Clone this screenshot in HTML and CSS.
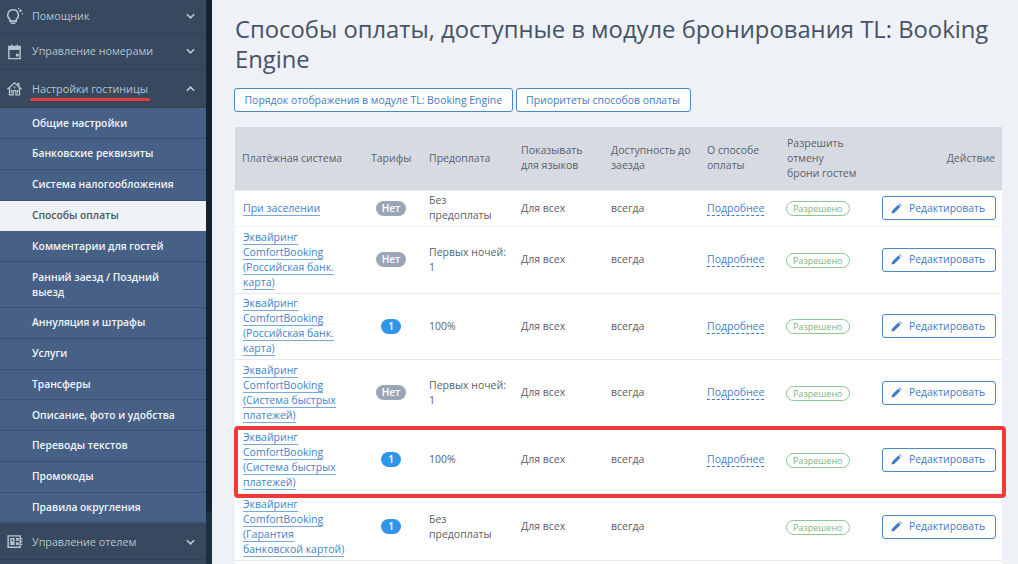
FILE: index.html
```html
<!DOCTYPE html>
<html lang="ru">
<head>
<meta charset="utf-8">
<title>Способы оплаты</title>
<link rel="stylesheet" href="styles.css">
</head>
<body>
<div class="app">
  <nav class="sidebar">
    <a class="top first"><svg class="ic" viewBox="0 0 24 24"><path d="M10 2.500a7.500 7.500 0 0 0-4.500 13.500V18.500h9V16A7.500 7.500 0 0 0 10 2.500z" fill="none" stroke="currentColor" stroke-width="2.200"/><path d="M6.500 20.500h7v2h-7z" fill="currentColor"/><circle cx="20.500" cy="4" r="1.800" fill="currentColor"/><circle cx="23.500" cy="8" r="1" fill="currentColor"/><circle cx="18" cy="0.800" r="1" fill="currentColor"/></svg><span class="lbl">Помощник</span><svg class="chev" viewBox="0 0 10 6"><path d="M1 1l4 4 4-4" fill="none" stroke="currentColor" stroke-width="1.800"/></svg></a>
    <a class="top"><svg class="ic" viewBox="0 0 24 24"><path d="M4 5h16v17H4z" fill="none" stroke="currentColor" stroke-width="2"/><path d="M4 5h16v5H4zM7 2h2v4H7zM15 2h2v4h-2zM14 15h4v4h-4z" fill="currentColor"/></svg><span class="lbl">Управление номерами</span><svg class="chev" viewBox="0 0 10 6"><path d="M1 1l4 4 4-4" fill="none" stroke="currentColor" stroke-width="1.800"/></svg></a>
    <a class="top open"><svg class="ic" viewBox="0 0 24 24"><path d="M2 13L12 4l10 9M5 11v10h5v-6h4v6h5V11" fill="none" stroke="currentColor" stroke-width="2"/><path d="M16 4h3v5l-3-2.500zM11 9h2v2.500h-2zM7 14h1.500v4H7zM15.500 14H17v4h-1.500z" fill="currentColor"/></svg><span class="lbl">Настройки гостиницы</span><svg class="chev" viewBox="0 0 10 6"><path d="M1 5l4-4 4 4" fill="none" stroke="currentColor" stroke-width="1.800"/></svg></a>
    <a class="sub">Общие настройки</a>
    <a class="sub">Банковские реквизиты</a>
    <a class="sub">Система налогообложения</a>
    <a class="sub active">Способы оплаты</a>
    <a class="sub">Комментарии для гостей</a>
    <a class="sub tall">Ранний заезд / Поздний выезд</a>
    <a class="sub">Аннуляция и штрафы</a>
    <a class="sub">Услуги</a>
    <a class="sub">Трансферы</a>
    <a class="sub">Описание, фото и удобства</a>
    <a class="sub">Переводы текстов</a>
    <a class="sub">Промокоды</a>
    <a class="sub">Правила округления</a>
    <a class="top last"><svg class="ic" viewBox="0 0 24 24"><path d="M3 4h17v16H3z" fill="none" stroke="currentColor" stroke-width="2"/><path d="M6 7h6v10H6zM14 7h4v4h-4zM14 13h4v4h-4zM21 7h2v2h-2zM21 11h2v2h-2zM21 15h2v2h-2z" fill="currentColor"/><path d="M8 9h2v3H8z" fill="#36495f"/></svg><span class="lbl">Управление отелем</span><svg class="chev" viewBox="0 0 10 6"><path d="M1 1l4 4 4-4" fill="none" stroke="currentColor" stroke-width="1.800"/></svg></a>
  </nav>
  <div class="scroll"><div class="thumb"></div></div>
  <main class="content">
    <h1>Способы оплаты, доступные в модуле бронирования TL: Booking Engine</h1>
    <div class="actions">
      <a class="btn">Порядок отображения в модуле TL: Booking Engine</a>
      <a class="btn">Приоритеты способов оплаты</a>
    </div>
    <table>
      <colgroup><col class="c1"><col class="c2"><col class="c3"><col class="c4"><col class="c5"><col class="c6"><col class="c7"><col class="c8"></colgroup>
      <thead>
        <tr><th>Платёжная система</th><th class="tar">Тарифы</th><th>Предоплата</th><th>Показывать для языков</th><th>Доступность до заезда</th><th>О способе оплаты</th><th>Разрешить<br>отмену<br>брони гостем</th><th class="act">Действие</th></tr>
      </thead>
      <tbody>
        <tr class="short"><td class="name"><a class="lnk">При заселении</a></td><td class="tar"><span class="bdg no">Нет</span></td><td>Без предоплаты</td><td>Для всех</td><td>всегда</td><td><a class="more">Подробнее</a></td><td><span class="ok">Разрешено</span></td><td class="act"><a class="edit"><svg class="pen" viewBox="0 0 12 12"><path d="M0.500 11.500l0.700-3L8 1.700l2.300 2.300-6.800 6.800zM8.800 0.900l0.700-0.500 2.100 2.100-0.500 0.700z" fill="currentColor"/></svg>Редактировать</a></td></tr>
        <tr><td class="name"><a class="lnk">Эквайринг ComfortBooking (Российская банк. карта)</a></td><td class="tar"><span class="bdg no">Нет</span></td><td>Первых ночей: 1</td><td>Для всех</td><td>всегда</td><td><a class="more">Подробнее</a></td><td><span class="ok">Разрешено</span></td><td class="act"><a class="edit"><svg class="pen" viewBox="0 0 12 12"><path d="M0.500 11.500l0.700-3L8 1.700l2.300 2.300-6.800 6.800zM8.800 0.900l0.700-0.500 2.100 2.100-0.500 0.700z" fill="currentColor"/></svg>Редактировать</a></td></tr>
        <tr class="tight"><td class="name"><a class="lnk">Эквайринг ComfortBooking (Российская банк. карта)</a></td><td class="tar"><span class="bdg">1</span></td><td>100%</td><td>Для всех</td><td>всегда</td><td><a class="more">Подробнее</a></td><td><span class="ok">Разрешено</span></td><td class="act"><a class="edit"><svg class="pen" viewBox="0 0 12 12"><path d="M0.500 11.500l0.700-3L8 1.700l2.300 2.300-6.800 6.800zM8.800 0.900l0.700-0.500 2.100 2.100-0.500 0.700z" fill="currentColor"/></svg>Редактировать</a></td></tr>
        <tr><td class="name"><a class="lnk">Эквайринг ComfortBooking (Система быстрых платежей)</a></td><td class="tar"><span class="bdg no">Нет</span></td><td>Первых ночей: 1</td><td>Для всех</td><td>всегда</td><td><a class="more">Подробнее</a></td><td><span class="ok">Разрешено</span></td><td class="act"><a class="edit"><svg class="pen" viewBox="0 0 12 12"><path d="M0.500 11.500l0.700-3L8 1.700l2.300 2.300-6.800 6.800zM8.800 0.900l0.700-0.500 2.100 2.100-0.500 0.700z" fill="currentColor"/></svg>Редактировать</a></td></tr>
        <tr><td class="name"><a class="lnk">Эквайринг ComfortBooking (Система быстрых платежей)</a></td><td class="tar"><span class="bdg">1</span></td><td>100%</td><td>Для всех</td><td>всегда</td><td><a class="more">Подробнее</a></td><td><span class="ok">Разрешено</span></td><td class="act"><a class="edit"><svg class="pen" viewBox="0 0 12 12"><path d="M0.500 11.500l0.700-3L8 1.700l2.300 2.300-6.800 6.800zM8.800 0.900l0.700-0.500 2.100 2.100-0.500 0.700z" fill="currentColor"/></svg>Редактировать</a></td></tr>
        <tr><td class="name"><a class="lnk">Эквайринг ComfortBooking (Гарантия банковской&nbsp;картой)</a></td><td class="tar"><span class="bdg">1</span></td><td>Без предоплаты</td><td>Для всех</td><td>всегда</td><td></td><td><span class="ok">Разрешено</span></td><td class="act"><a class="edit"><svg class="pen" viewBox="0 0 12 12"><path d="M0.500 11.500l0.700-3L8 1.700l2.300 2.300-6.800 6.800zM8.800 0.900l0.700-0.500 2.100 2.100-0.500 0.700z" fill="currentColor"/></svg>Редактировать</a></td></tr>
        <tr class="short"><td></td><td></td><td></td><td></td><td></td><td></td><td></td><td></td></tr>
      </tbody>
    </table>
  </main>
  <div class="mark-line"></div>
  <div class="mark-box"></div>
</div>
</body>
</html>
```
FILE: styles.css
```css
* { box-sizing: border-box; }
html, body { margin: 0; padding: 0; height: 100%; overflow: hidden; }
body { font-family: "Open Sans", "Noto Sans", sans-serif; font-size: 10.500px; color: #5b5f66; background: #eef1f5; }
.app { position: relative; display: flex; width: 1018px; height: 564px; overflow: hidden; }

.sidebar { width: 206px; flex: none; background: #36495f; display: flex; flex-direction: column; }
.top { display: flex; align-items: center; height: 36.500px; padding: 0 11px 0 6px; color: #b9c3ce; border-bottom: 1px solid #2f4156; font-size: 10.750px; }
.top.first { height: 33.500px; }
.top.open { height: 38.300px; }
.top.last { height: 37px; padding-top: 1px; }
.ic { width: 17px; height: 17px; flex: none; color: #b9c3ce; margin-right: 9px; }
.lbl { flex: 1; }
.chev { width: 9px; height: 6px; color: #c3ccd6; flex: none; }
.sub { display: flex; align-items: center; height: 30.750px; padding: 0 24px 0 32px; background: #466086; color: #f2f5f8; font-weight: 600; font-size: 10.300px; line-height: 15px; border-bottom: 1px solid #3c5273; }
.sub.tall { height: 46px; }
.sub.active { background: #eef1f5; color: #4b5461; border-bottom-color: #eef1f5; }

.scroll { width: 6px; flex: none; background: #1f2e40; }
.thumb { height: 512px; background: #17222f; border-radius: 0 0 3px 3px; }

.content { flex: 1; min-width: 0; padding: 14px 16px 0 23px; }
h1 { margin: 0; font-size: 23.800px; line-height: 30px; font-weight: 400; color: #455366; }
.actions { display: flex; gap: 3px; margin: 14px 0 0 -1px; }
.btn { display: block; height: 24px; line-height: 22px; padding: 0 9.500px; background: #fff; border: 1px solid #4a87cf; border-radius: 3px; color: #3f7cc4; font-size: 10.450px; }
table { width: 767px; margin-top: 15px; border-collapse: separate; border-spacing: 0; table-layout: fixed; background: #fff; }
.c1 { width: 129px; } .c2 { width: 58px; } .c3 { width: 92px; } .c4 { width: 90px; }
.c5 { width: 96px; } .c6 { width: 80px; } .c7 { width: 95px; } .c8 { width: 127px; }
th { background: #d6dbe1; font-weight: 400; text-align: left; padding: 8.750px 7px; line-height: 15px; font-size: 10.500px; color: #5a6270; border-bottom: 1px solid #e8ebef; }
td { padding: 3px 7px; line-height: 15px; vertical-align: middle; border-bottom: 1px solid #e8ebef; height: 66.750px; }
td.name { padding-left: 8px; }
tr.tight td { height: 66px; padding-top: 2.500px; padding-bottom: 2.500px; }
tr.short td { height: 36px; padding-top: 2px; padding-bottom: 2px; border-bottom: 1px solid #eef1f5; }
.tar { text-align: center; padding-right: 11px; }
.act { text-align: right; }
.lnk { color: #4583ca; border-bottom: 1px solid #7aa9e0; }
.more { color: #4583ca; border-bottom: 1px dashed #3c7dc6; }
.bdg { display: inline-block; min-width: 20px; height: 15px; line-height: 15px; padding: 0 6px; border-radius: 8px; background: #2f95ea; color: #fff; font-size: 10px; font-weight: 600; text-align: center; }
.bdg.no { min-width: 30px; background: #9aa6b7; }
.ok { display: inline-block; height: 15px; line-height: 13px; padding: 0 6px; border: 1px solid #8cc690; border-radius: 8px; color: #7db681; font-size: 9px; background: #fff; margin: 1px 0 0 -1px; vertical-align: middle; }
.edit { display: inline-flex; align-items: center; width: 114px; height: 24px; padding-left: 8px; border: 1px solid #4a87cf; border-radius: 3px; color: #3f7cc4; background: #fff; font-size: 10.400px; text-align: left; }
.pen { width: 11px; height: 11px; margin-right: 7px; flex: none; }

.mark-line { position: absolute; left: 30px; top: 98px; width: 120px; height: 3px; background: #ef3a3a; border-radius: 2px; }
.mark-box { position: absolute; left: 234px; top: 426px; width: 772px; height: 72px; border: 4px solid #ef3a3a; border-radius: 4px; }
```
